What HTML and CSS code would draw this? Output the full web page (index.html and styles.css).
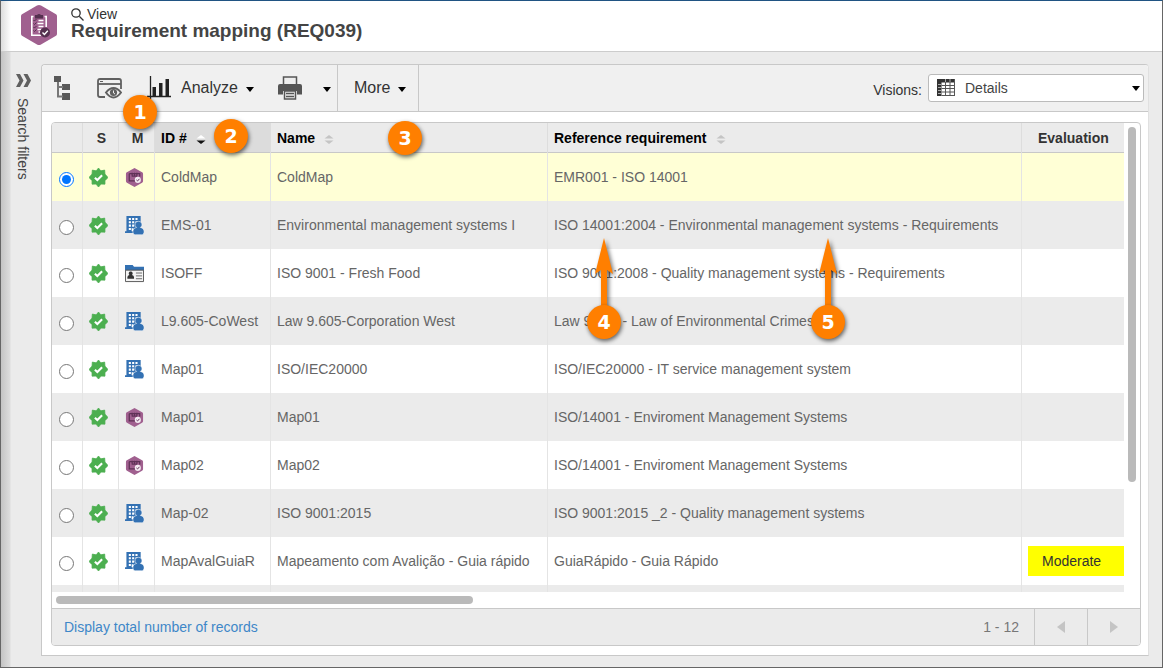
FILE: index.html
```html
<!DOCTYPE html>
<html lang="en">
<head>
<meta charset="utf-8">
<title>Requirement mapping (REQ039)</title>
<link rel="stylesheet" href="styles.css">
</head>
<body>
<svg class="sprite" aria-hidden="true">
  <symbol id="seal" viewBox="0 0 20 20">
    <path fill="#4caf50" d="M10 0L12.400 3 16.500 2.200 16.800 6.400 20 10 16.800 13.300 16.800 17 12.700 16.900 10 20 7.300 16.900 3.200 17 3.200 13.300 0 10 3.200 6.400 3.500 2.200 7.600 3z" stroke="#4caf50" stroke-linejoin="round" stroke-width=".8"/>
    <path fill="none" stroke="#fff" stroke-width="2.200" d="M6.200 10.200l2.600 2.500 5-5"/>
  </symbol>
  <symbol id="hex" viewBox="0 0 18 20">
    <path fill="#a0608f" d="M9 0l8 4.400q1 .5 1 1.600v8q0 1-1 1.600L9 20l-8-4.400q-1-.6-1-1.600V6q0-1.100 1-1.600z"/>
    <path fill="none" stroke="#5f3157" stroke-width="1.300" d="M3.500 6h11v3M3.500 6v7.500h6M6 8.500h6M6.500 5v3M9 5v3M11.500 5v3"/>
    <circle cx="12.500" cy="12.500" r="3.200" fill="#f4eaf2"/>
    <path fill="none" stroke="#5f3157" stroke-width="1" d="M11 12.500l1.200 1.200 2-2.300"/>
  </symbol>
  <symbol id="company" viewBox="0 0 20 20">
    <path fill="#3371b3" d="M1.500 0h15v7h-3.600v6.500L9 17v1H0v-2h1.500z"/>
    <path fill="#fff" d="M4 2h2.200v2.200H4zM7.500 2h2.200v2.200H7.500zM11 2h2.200v2.200H11zM4 5.500h2.200v2.200H4zM7.500 5.500h2.200v2.200H7.500zM11 5.500h2.200v2.200H11zM4 9h2.200v2.200H4zM7.500 9h2.200v2.200H7.500zM4 12.500h2.200v2.200H4zM7 13h2v3H7z"/>
    <path fill="#3371b3" stroke="#fff" stroke-width=".6" d="M14.200 5.600a3.500 3.500 0 0 1 2 6.500c2.500.4 3.900 2 3.900 4.500 0 2-1 3.200-2.600 3.200h-6.600c-1.600 0-2.600-1.200-2.600-3.200 0-2.500 1.400-4.100 3.900-4.500a3.500 3.500 0 0 1 2-6.500z"/>
  </symbol>
  <symbol id="card" viewBox="0 0 20 18">
    <path fill="#3371b3" d="M0 0h8l1.500 2H20v4H0z"/>
    <path fill="#f4f4f4" stroke="#555" d="M.5 5.500h19v12H.5z"/>
    <path fill="#333" d="M6 7a2 2 0 0 1 1.300 3.600Q9.500 11 9.500 13v1.500h-7V13q0-2 2.200-2.400A2 2 0 0 1 6 7z"/>
    <path stroke="#666" d="M11.500 8.500H18M11.500 11.500H18M11.500 14.500H18"/>
  </symbol>
  <symbol id="sort" viewBox="0 0 10 9"><path d="M5 0l4.500 3.500h-9z"/><path d="M5 9L.5 5.500h9z"/></symbol>
  <symbol id="caret" viewBox="0 0 8 5"><path d="M0 0h8L4 5z"/></symbol>
  <symbol id="pointer" viewBox="0 0 24 74"><path d="M12 0l9 36-6-4v42H9V32l-6 4z"/></symbol>
</svg>
<div class="app">
  <header class="header">
    <svg class="logo" viewBox="0 0 36 40">
      <path fill="#a0608f" d="M18 0q1 0 2 .6l15 8.700q1 .7 1 2v17.400q0 1.300-1 2l-15 8.700q-2 1.200-4 0l-15-8.700q-1-.7-1-2V11.300q0-1.300 1-2l15-8.700Q17 0 18 0z"/>
      <path fill="none" stroke="#fff" stroke-width="1.600" d="M12.500 11.500h-1.700v18.700h10M23.500 11.500h1.700V22"/>
      <path fill="#54304f" d="M14 10h2q2-2 4 0h2v3.500h-8z"/>
      <path fill="none" stroke="#fff" stroke-width="1.300" d="M17.500 15.500h5M16.500 18.500h6M17.500 21.500h5M16.500 24.500h4M17.500 27h3"/>
      <path fill="none" stroke="#54304f" d="M12.500 15l1 1 2-2M12.500 18.500l1 1 2-2M12.500 22l1 1 2-2M12.500 25.500l1 1 2-2"/>
      <circle cx="24" cy="27.500" r="5" fill="#54304f"/>
      <path fill="none" stroke="#fff" stroke-width="1.400" d="M21.500 27.500l1.900 1.900 3.400-3.700"/>
    </svg>
    <div>
      <div class="mode">
        <svg width="13" height="13" viewBox="0 0 13 13"><path fill="none" stroke="#333" stroke-width="1.300" d="M8.500 8.500L12.500 12.500M5 .8a4.200 4.200 0 1 1 0 8.400 4.200 4.200 0 0 1 0-8.400z"/></svg>
        <span>View</span>
      </div>
      <h1>Requirement mapping (REQ039)</h1>
    </div>
  </header>
  <div class="body">
    <button class="side" type="button">
      <svg width="15" height="13" viewBox="0 0 15 13"><path fill="#606060" d="M0 0h4l3.500 6.500L4 13H0l3.500-6.500zM7.500 0h4L15 6.500 11.500 13h-4L11 6.500z"/></svg>
      <span>Search filters</span>
    </button>
    <main class="panel">
      <div class="toolbar">
        <div class="tools">
          <button type="button" aria-label="Tree"><svg width="16" height="24" viewBox="0 0 16 24"><path fill="#585858" d="M0 0h7v6H0zM8 8h8v6H8zM8 17h8v7H8z"/><path fill="none" stroke="#777" stroke-width="2" d="M4 6v14.500h5M4 11h5"/></svg></button>
          <button type="button" aria-label="Preview"><svg width="25" height="21" viewBox="0 0 25 21"><path fill="none" stroke="#606060" stroke-width="1.800" d="M8 19H3q-2 0-2-2V3q0-2 2-2h19q2 0 2 2v8"/><path stroke="#606060" stroke-width="1.800" d="M1 6h23"/><path stroke="#606060" d="M3 3.500h3"/><path fill="#f0f0f0" stroke="#606060" stroke-width="2" d="M9 14.500Q12.500 10 16.500 10T24 14.500Q20.500 19.500 16.500 19.500T9 14.500z"/><circle cx="16.500" cy="14.500" r="3.600" fill="#606060"/><path fill="none" stroke="#eee" d="M16.500 12.500v2.500l1.500 1"/></svg></button>
          <button type="button" class="analyze"><svg width="24" height="24" viewBox="0 0 24 24"><path stroke="#222" stroke-width="1.300" d="M3.500 0v23M0 20.500h24"/><path fill="#222" d="M5.500 11h3.500v9h-3.500zM12 7h3.500v13h-3.500zM18.500 3h3.500v17h-3.500z"/></svg><span>Analyze</span><svg class="caret" width="8" height="5"><use href="#caret"/></svg></button>
          <button type="button" class="print" aria-label="Print"><svg width="24" height="24" viewBox="0 0 24 24"><path fill="#eee" stroke="#555" stroke-width="1.500" d="M5.500 9V1h13v8"/><path fill="#555" d="M2 8h20q2 0 2 2v8.500h-5V15H5v3.500H0V10q0-2 2-2z"/><path fill="#eee" stroke="#555" stroke-width="1.500" d="M6.500 15h11v8h-11z"/><path stroke="#555" stroke-width="1.500" d="M8 17.500h8M8 20.500h8"/></svg><svg class="caret" width="8" height="5"><use href="#caret"/></svg></button>
        </div>
        <button type="button" class="more">More<svg class="caret" width="8" height="5"><use href="#caret"/></svg></button>
        <div class="visions">
          <label for="vision">Visions:</label>
          <div class="combo">
            <select id="vision"><option>Details</option></select>
            <svg class="combo-icon" width="18" height="17" viewBox="0 0 18 17"><path fill="#fff" d="M0 0h18v17H0z"/><path fill="#333" d="M0 0h18v3.500H0zM0 0h4.500v17H0z"/><path fill="none" stroke="#555" d="M4.500 6.500H18M4.500 9.500H18M4.500 13H18M4.500 16.500H18M8.500 3v14M13 3v14M17.500 0v17"/><path stroke="#aaa" d="M1 5.500h3M1 8.500h3M1 11.500h3M1 14.500h3M8.500 0v3M13 0v3"/></svg>
            <svg class="combo-caret" width="8" height="5"><use href="#caret"/></svg>
          </div>
        </div>
      </div>
      <section class="grid">
        <div class="viewport">
          <div class="rows">
            <table>
              <colgroup><col class="c-pick"><col class="c-icon"><col class="c-icon"><col class="c-id"><col class="c-name"><col class="c-ref"><col></colgroup>
              <thead>
                <tr><th></th><th class="mid">S</th><th class="mid">M</th>
                <th class="sorted"><button type="button">ID # <svg class="sort" width="10" height="9" viewBox="0 0 10 9"><path fill="#fff" d="M5 0l4.500 3.500h-9z"/><path fill="#111" d="M5 9L.5 5.500h9z"/></svg></button></th>
                <th><button type="button">Name <svg class="sort" width="10" height="9"><use href="#sort"/></svg></button></th>
                <th><button type="button">Reference requirement <svg class="sort" width="10" height="9"><use href="#sort"/></svg></button></th>
                <th class="eval">Evaluation</th></tr>
              </thead>
              <tbody>
                <tr class="selected"><td><input type="radio" name="row" aria-label="ColdMap" checked></td><td><svg class="ico"><use href="#seal"/></svg></td><td><svg class="ico"><use href="#hex"/></svg></td><td>ColdMap</td><td>ColdMap</td><td>EMR001 - ISO 14001</td><td></td></tr>
                <tr><td><input type="radio" name="row" aria-label="EMS-01"></td><td><svg class="ico"><use href="#seal"/></svg></td><td><svg class="ico"><use href="#company"/></svg></td><td>EMS-01</td><td>Environmental management systems I</td><td>ISO 14001:2004 - Environmental management systems - Requirements</td><td></td></tr>
                <tr><td><input type="radio" name="row" aria-label="ISOFF"></td><td><svg class="ico"><use href="#seal"/></svg></td><td><svg class="ico"><use href="#card"/></svg></td><td>ISOFF</td><td>ISO 9001 - Fresh Food</td><td>ISO 9001:2008 - Quality management systems - Requirements</td><td></td></tr>
                <tr><td><input type="radio" name="row" aria-label="L9.605-CoWest"></td><td><svg class="ico"><use href="#seal"/></svg></td><td><svg class="ico"><use href="#company"/></svg></td><td>L9.605-CoWest</td><td>Law 9.605-Corporation West</td><td>Law 9.605 - Law of Environmental Crimes</td><td></td></tr>
                <tr><td><input type="radio" name="row" aria-label="Map01 ISO/IEC20000"></td><td><svg class="ico"><use href="#seal"/></svg></td><td><svg class="ico"><use href="#company"/></svg></td><td>Map01</td><td>ISO/IEC20000</td><td>ISO/IEC20000 - IT service management system</td><td></td></tr>
                <tr><td><input type="radio" name="row" aria-label="Map01"></td><td><svg class="ico"><use href="#seal"/></svg></td><td><svg class="ico"><use href="#hex"/></svg></td><td>Map01</td><td>Map01</td><td>ISO/14001 - Enviroment Management Systems</td><td></td></tr>
                <tr><td><input type="radio" name="row" aria-label="Map02"></td><td><svg class="ico"><use href="#seal"/></svg></td><td><svg class="ico"><use href="#hex"/></svg></td><td>Map02</td><td>Map02</td><td>ISO/14001 - Enviroment Management Systems</td><td></td></tr>
                <tr><td><input type="radio" name="row" aria-label="Map-02"></td><td><svg class="ico"><use href="#seal"/></svg></td><td><svg class="ico"><use href="#company"/></svg></td><td>Map-02</td><td>ISO 9001:2015</td><td>ISO 9001:2015 _2 - Quality management systems</td><td></td></tr>
                <tr><td><input type="radio" name="row" aria-label="MapAvalGuiaR"></td><td><svg class="ico"><use href="#seal"/></svg></td><td><svg class="ico"><use href="#company"/></svg></td><td>MapAvalGuiaR</td><td>Mapeamento com Avalição - Guia rápido</td><td>GuiaRápido - Guia Rápido</td><td class="rating"><span>Moderate</span></td></tr>
                <tr><td></td><td></td><td></td><td></td><td></td><td></td><td></td></tr>
              </tbody>
            </table>
          </div>
          <div class="vbar"><div class="thumb"></div></div>
        </div>
        <div class="hbar"><div class="thumb"></div></div>
        <footer class="footer">
          <a href="#">Display total number of records</a>
          <span class="range">1 - 12</span>
          <button type="button" aria-label="Previous page"><svg width="8" height="12" viewBox="0 0 8 12"><path d="M8 0v12L0 6z"/></svg></button>
          <button type="button" aria-label="Next page"><svg width="8" height="12" viewBox="0 0 8 12"><path d="M0 0v12l8-6z"/></svg></button>
        </footer>
      </section>
    </main>
  </div>
  <svg class="pointer p4"><use href="#pointer"/></svg>
  <svg class="pointer p5"><use href="#pointer"/></svg>
  <span class="badge b1">1</span>
  <span class="badge b2">2</span>
  <span class="badge b3">3</span>
  <span class="badge b4">4</span>
  <span class="badge b5">5</span>
</div>
</body>
</html>
```
FILE: styles.css
```css
* { box-sizing: border-box; }
body { margin: 0; font: 14px/18px "Liberation Sans", Arial, sans-serif; color: #333; }
button { font: inherit; color: inherit; background: none; border: 0; padding: 0; margin: 0; display: flex; align-items: center; }
svg { display: block; flex: none; }
.sprite { position: absolute; width: 0; height: 0; }
.app { position: relative; height: 100vh; display: flex; flex-direction: column; overflow: hidden; border: 1px solid #666; border-top-color: #205483; background: #ebebeb; }

.header { flex: none; height: 51px; padding: 4px 20px 0; display: flex; gap: 14px; background: linear-gradient(90deg, #ddd, #fff 10px); border-bottom: 1px solid #ccc; }
.logo { width: 36px; height: 40px; }
.mode { display: flex; align-items: center; gap: 3px; height: 18px; }
h1 { margin: 0; font-size: 19px; line-height: 16px; color: #444; }

.body { flex: 1; min-height: 0; display: flex; padding: 12px 13px 11px 0; background: linear-gradient(90deg, #c4c4c4, #ddd 9px, #ebebeb 10px); }
.side { flex: none; width: 40px; flex-direction: column; gap: 11px; padding: 10px 0 0 4px; color: #444; }
.side span { writing-mode: vertical-rl; }

.panel { flex: 1; min-width: 0; display: flex; flex-direction: column; background: #fff; border: 1px solid #c8c8c8; border-right-color: #e0e0e0; border-radius: 4px 4px 0 0; }
.toolbar { flex: none; height: 47px; display: flex; background: #f0f0f0; border-bottom: 1px solid #c8c8c8; font-size: 16px; border-radius: 4px 4px 0 0; }
.tools { display: flex; padding: 0 6px 0 12px; gap: 27px; border-right: 1px solid #c8c8c8; }
.caret { fill: #000; margin-top: 2px; }
.analyze { gap: 8px; margin-left: -2px; }
.analyze span { padding-left: 2px; }
.print { gap: 21px; margin-left: -3px; }
.more { gap: 8px; padding: 0 12px 0 16px; border-right: 1px solid #c8c8c8; }
.visions { margin-left: auto; padding-right: 4px; display: flex; align-items: center; gap: 6px; font-size: 14px; }
.visions label { padding-top: 3px; }
.combo { position: relative; }
.combo select { appearance: none; width: 216px; height: 28px; padding: 0 24px 0 36px; font: inherit; color: #444; background: #fff; border: 1px solid #bbb; border-radius: 3px; }
.combo-icon { position: absolute; left: 9px; top: 5px; pointer-events: none; }
.combo-caret { position: absolute; right: 4px; top: 12px; pointer-events: none; }

.grid { flex: 1; min-height: 0; margin: 10px 7px 9px 9px; display: flex; flex-direction: column; border: 1px solid #c8c8c8; border-radius: 4px; overflow: hidden; }
.viewport { flex: 1; min-height: 0; display: flex; }
.rows { flex: 1; min-width: 0; overflow: hidden; }
table { width: 100%; table-layout: fixed; border-collapse: separate; border-spacing: 0; color: #666; }
.c-pick { width: 31px; }
.c-icon { width: 36px; }
.c-id { width: 116px; }
.c-name { width: 277px; }
.c-ref { width: 474px; }
th { height: 30px; padding: 0 6px; text-align: left; background: #ebebeb; color: #000; box-shadow: inset 0 -1px #c8c8c8; border-right: 1px solid #ddd; white-space: nowrap; }
th:last-child, td:last-child { border-right: 0; }
th button { gap: 9px; }
.sort { fill: #c4c4c4; margin-top: 2px; }
.sorted { background: #dcdcdc; }
th.mid { text-align: center; padding: 0 0 0 2px; color: #333; }
th.eval { padding-left: 16px; color: #333; }
td { height: 48px; padding: 0 6px; border-right: 1px solid #e4e4e4; white-space: nowrap; }
tr:nth-child(even) td { background: #ebebeb; }
.selected td { background: #ffffd6; }
td input { display: block; width: 15px; height: 15px; margin: 4px 0 0 1px; }
.ico { width: 19px; height: 19px; }
.rating { padding-right: 0; }
.rating span { display: block; padding: 6px 14px; background: #ff0; color: #333; }
.vbar { flex: none; width: 16px; padding: 4px; }
.vbar .thumb { width: 8px; height: 77%; border-radius: 4px; background: #bababa; }
.hbar { flex: none; height: 16px; padding: 4px; }
.hbar .thumb { width: 417px; height: 8px; border-radius: 4px; background: #bababa; }
.footer { flex: none; height: 37px; display: flex; align-items: center; background: #ebebeb; border-top: 1px solid #c8c8c8; padding-left: 12px; }
.footer a { color: #3e87c8; text-decoration: none; }
.range { margin-left: auto; padding-right: 15px; color: #777; }
.footer button { height: 36px; width: 53px; justify-content: center; border-left: 1px solid #c8c8c8; fill: #c4c4c4; }

/* Numbered callouts laid over the screen */
.badge { position: absolute; width: 34px; height: 34px; border-radius: 50%; background: #ff7f00; color: #fff; font: bold 19px/34px "DejaVu Sans", Verdana, sans-serif; text-align: center; box-shadow: 1px 2px 4px #0009; }
.pointer { position: absolute; width: 24px; height: 74px; fill: #ff7f00; filter: drop-shadow(2px 2px 2px #0008); }
.b1 { left: 122px; top: 94px; }
.b2 { left: 213px; top: 118px; }
.b3 { left: 387px; top: 120px; }
.b4 { left: 586px; top: 304px; }
.b5 { left: 810px; top: 304px; }
.p4 { left: 591px; top: 237px; }
.p5 { left: 815px; top: 237px; }
```
